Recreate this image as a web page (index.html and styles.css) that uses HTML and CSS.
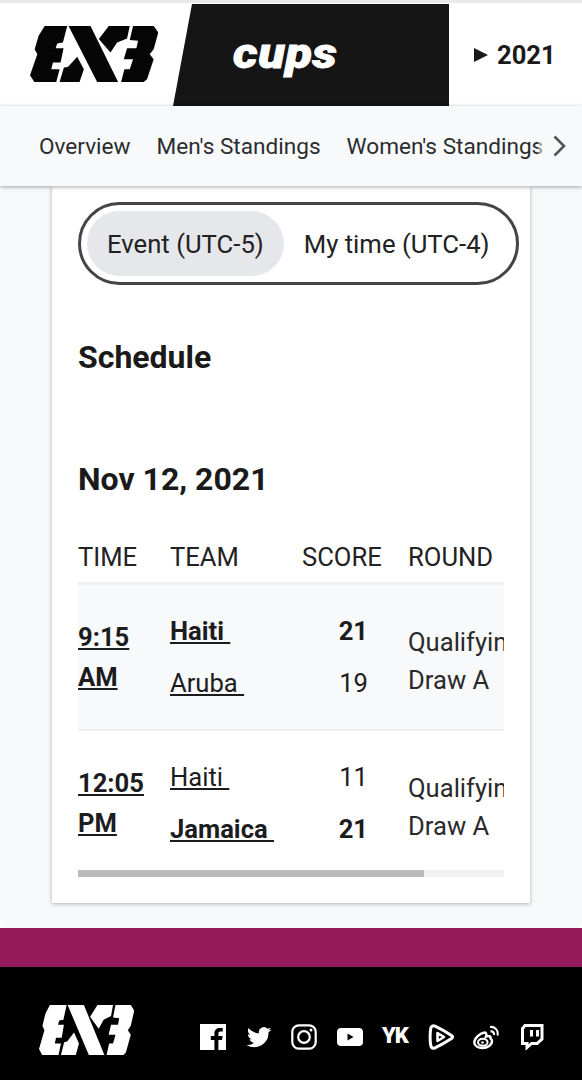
FILE: index.html
```html
<!DOCTYPE html>
<html lang="en">
<head>
<meta charset="utf-8">
<title>3x3 cups 2021 schedule</title>
<link rel="stylesheet" href="styles.css">
</head>
<body>
<svg class="defs" width="0" height="0" aria-hidden="true">
  <symbol id="logo" viewBox="90 78 385 167" preserveAspectRatio="none">
    <path d="M134 78H202L189 127L172 130L167 144H191L182 187H159L154 207H179L169 245H103L90 225L112 162L104 147L116 107Z"/>
    <path d="M206 78H272L355 245H292Z"/>
    <path d="M327 78H390L382 115L352 127L332 157L297 117Z"/>
    <path d="M179 245L192 202L204 200L232 170L252 207L239 245Z"/>
    <path d="M400 78H462L476 97L462 147L450 162L462 177L442 237L432 245H364L374 207H390L400 177H372L382 144H410L415 122L390 120Z"/>
  </symbol>
</svg>
<header class="top">
  <a class="brand" href="#"><svg class="logo-main"><use href="#logo"/></svg></a>
  <div class="cups"><span class="cups-text">cups</span></div>
  <div class="year"><span class="tri"></span><span>2021</span></div>
</header>
<nav class="nav">
  <a href="#">Overview</a>
  <a href="#">Men's Standings</a>
  <a href="#">Women's Standings</a>
  <span class="more">
    <svg viewBox="0 0 14 24" width="14" height="24"><path d="M1.500 2.500 11 12 1.500 21.500" fill="none" stroke="#555" stroke-width="2.600"/></svg>
  </span>
</nav>
<main class="page">
  <section class="card">
    <div class="toggle">
      <button class="pill active">Event (UTC-5)</button>
      <button class="pill">My time (UTC-4)</button>
    </div>
    <h2 class="section-title">Schedule</h2>
    <h3 class="day">Nov 12, 2021</h3>
    <div class="table-wrap">
      <table class="games">
        <thead>
          <tr><th class="c-time">TIME</th><th class="c-team">TEAM</th><th class="c-score">SCORE</th><th class="c-round">ROUND</th></tr>
        </thead>
        <tbody>
          <tr class="odd">
            <td class="time"><a href="#">9:15<br>AM</a></td>
            <td class="teams"><div class="line win"><a href="#">Haiti&nbsp;</a></div><div class="line"><a href="#">Aruba&nbsp;</a></div></td>
            <td class="scores"><div class="line win">21</div><div class="line">19</div></td>
            <td class="round">Qualifying<br>Draw A</td>
          </tr>
          <tr>
            <td class="time"><a href="#">12:05<br>PM</a></td>
            <td class="teams"><div class="line"><a href="#">Haiti&nbsp;</a></div><div class="line win"><a href="#">Jamaica&nbsp;</a></div></td>
            <td class="scores"><div class="line">11</div><div class="line win">21</div></td>
            <td class="round">Qualifying<br>Draw A</td>
          </tr>
        </tbody>
      </table>
    </div>
    <div class="scrollbar"><div class="thumb"></div></div>
  </section>
</main>
<div class="band"></div>
<footer class="foot">
  <svg class="logo-foot"><use href="#logo"/></svg>
  <div class="social">
    <svg class="ico" viewBox="0 0 26 26"><path fill="#fff" fill-rule="evenodd" d="M0 0H26V26H18.4V16H22L22.6 12H18.4V9.6C18.4 8.4 19 7.6 20.4 7.6H22.8V4.2C22 4.1 21 4 19.8 4 16.6 4 14.4 6 14.4 9.2V12H10.8V16H14.4V26H0Z"/></svg>
    <svg class="ico" viewBox="0 0 26 26"><path fill="#fff" d="M25.5 5.6c-.9.4-1.9.7-2.9.8 1-.6 1.8-1.6 2.2-2.8-1 .6-2 1-3.2 1.2A5 5 0 0 0 13 9.4C8.800 9.200 5.100 7.200 2.600 4.100c-1.300 2.300-.6 5.200 1.600 6.700-.8 0-1.600-.2-2.300-.6 0 2.400 1.700 4.500 4 5-.7.2-1.500.2-2.300.1.600 2 2.500 3.500 4.700 3.500A10 10 0 0 1 .5 20.900 14.300 14.300 0 0 0 22.500 8.200c1.200-.7 2.200-1.600 3-2.600Z"/></svg>
    <svg class="ico" viewBox="0 0 26 26"><g fill="none" stroke="#fff" stroke-width="2.200"><rect x="1.300" y="1.300" width="23.400" height="23.400" rx="6.500"/><circle cx="13" cy="13" r="5.800"/></g><circle cx="20" cy="6" r="1.500" fill="#fff"/></svg>
    <svg class="ico" viewBox="0 0 26 26"><path fill="#fff" fill-rule="evenodd" d="M4 4H22C24.500 4 26 5.500 26 8V18C26 20.500 24.500 22 22 22H4C1.500 22 0 20.500 0 18V8C0 5.500 1.500 4 4 4ZM10.500 9.500V16.500L16.500 13Z"/></svg>
    <span class="ico yk">YK</span>
    <svg class="ico" viewBox="0 0 26 26"><path fill="none" stroke="#fff" stroke-width="3" stroke-linejoin="round" d="M3 3.500C1.800 8 1.800 18 3 22.500 4 24.500 5.500 24.500 7 23.800 13 21 19 17.500 23.500 14.500 25 13.500 25 12.500 23.500 11.500 19 8.500 13 5 7 2.200 5.500 1.500 4 1.500 3 3.500Z"/><path fill="none" stroke="#fff" stroke-width="2.600" stroke-linejoin="round" d="M9.500 9V17L16 13Z"/></svg>
    <svg class="ico" viewBox="0 0 26 26"><g fill="none" stroke="#fff"><path stroke-width="2.200" d="M17.500 7.500C19.500 7 21.500 8.500 21 11"/><path stroke-width="2" d="M17 3C21.500 2.200 25.700 6 24.500 11.500"/><path stroke-width="2.400" d="M19 17C19 21 14.500 24 9.500 24 5 24 1.300 22 1.300 18.500 1.300 14.500 7 9 11.500 8.500 13.500 8.500 13.800 10.500 13 12.500 15.500 11.700 18 12 17.500 14.500 18.500 15 19 16 19 17Z"/><ellipse cx="9.800" cy="18.300" rx="4.800" ry="3.500" stroke-width="2"/></g><circle cx="9.500" cy="18.500" r="1.300" fill="#fff"/></svg>
    <svg class="ico" viewBox="0 0 26 26"><path fill="none" stroke="#fff" stroke-width="3" d="M3.500 4.500V19.500H8V23.500L12.500 19.500H18L23 15V1.500H6Z"/><path fill="#fff" d="M11 6H14V12.500H11ZM17 6H20V12.500H17Z"/></svg>
  </div>
</footer>
</body>
</html>
```
FILE: styles.css
```css
* { box-sizing: border-box; }
html, body { margin: 0; padding: 0; }
body {
  width: 582px;
  height: 1080px;
  overflow: hidden;
  background: #fff;
  color: #1c1c1e;
  font-family: Roboto, "Liberation Sans", sans-serif;
}
a { color: inherit; }
.defs { display: block; height: 0; }

.top {
  display: flex;
  height: 106px;
  background: #fff;
  border-top: 3px solid #e9e9ea;
}
.brand {
  display: flex;
  width: 173px;
  padding: 23px 0 0 30px;
}
.logo-main { width: 128px; height: 56px; fill: #050505; }
.cups {
  width: 276px;
  margin-top: 1px;
  padding-left: 60px;
  display: flex;
  align-items: center;
  background: #151516;
  clip-path: polygon(19px 0, 100% 0, 100% 100%, 0 100%);
}
.cups-text {
  color: #fff;
  font-size: 42px;
  font-weight: 900;
  font-style: italic;
  letter-spacing: .5px;
  line-height: 1;
  margin-top: -2px;
  -webkit-text-stroke: .8px #fff;
  transform: scaleX(1.16);
  transform-origin: left center;
}
.year {
  flex: 1;
  display: flex;
  align-items: center;
  gap: 9px;
  padding-left: 25px;
  font-size: 25.6px;
  font-weight: 700;
  color: #1a1a1a;
}
.tri {
  width: 0;
  height: 0;
  border-style: solid;
  border-width: 7px 0 7px 14px;
  border-color: transparent transparent transparent #1a1a1a;
}

.nav {
  position: relative;
  z-index: 2;
  display: flex;
  gap: 26px;
  align-items: center;
  height: 80px;
  padding-left: 39px;
  background: #f8f9fb;
  box-shadow: 0 1px 4px rgba(0, 0, 0, .35);
  font-size: 22.6px;
  white-space: nowrap;
  overflow: hidden;
}
.nav a { text-decoration: none; color: #2c2c2e; font-weight: 400; }
.more {
  position: absolute;
  right: 0;
  top: 0;
  bottom: 0;
  width: 44px;
  padding-left: 15px;
  display: flex;
  align-items: center;
  background: linear-gradient(to right, rgba(248, 249, 251, .4), #f8f9fb 30%);
}

.page {
  height: 742px;
  padding: 0 52px;
  background: #f8f9fb;
  border-radius: 0 0 6px 6px;
}
.card {
  height: 717px;
  padding: 16px 26px 0;
  background: #fff;
  box-shadow: 0 1px 4px rgba(0, 0, 0, .3);
}
.toggle {
  display: flex;
  width: 441px;
  padding: 6px;
  border: 3px solid #444;
  border-radius: 42px;
}
.pill {
  height: 65px;
  padding: 0 20px;
  border: 0;
  border-radius: 33px;
  background: none;
  font: 400 25.7px Roboto, sans-serif;
  color: #222;
  white-space: nowrap;
}
.pill.active { background: #e5e7eb; }
.section-title {
  margin: 52px 0 0;
  font-size: 32px;
  font-weight: 700;
  line-height: 40px;
  color: #1a1a1a;
}
.day {
  margin: 82px 0 0;
  font-size: 32px;
  font-weight: 700;
  line-height: 40px;
  color: #1a1a1a;
}
.table-wrap { width: 426px; overflow: hidden; margin-top: 40px; }
.games { width: 530px; border-collapse: collapse; table-layout: fixed; font-size: 25.6px; }
.games th {
  height: 43px;
  padding: 0 0 7px;
  font-weight: 400;
  text-align: left;
  line-height: 36px;
  border-bottom: 3px solid #eeeff1;
  color: #222;
}
.c-time { width: 92px; }
.c-team { width: 132px; }
.c-score { width: 106px; }
.c-round { width: 200px; }
.games td { padding: 0; vertical-align: middle; border-bottom: 2px solid #eeeff1; height: 146px; }
.games tbody tr:last-child td { border-bottom: 0; height: 140px; padding-top: 6px; }
.odd { background: #f8f9fb; }
.time { font-weight: 700; line-height: 40px; }
.line { height: 52px; line-height: 52px; }
.win { font-weight: 700; }
.games td.scores { text-align: right; padding-right: 40px; }
.games td.round { line-height: 38px; padding-top: 8px; color: #2a2a2a; }
.games tbody tr:last-child td.round { padding-top: 13px; }
.scrollbar { width: 426px; height: 7px; background: #f1f1f1; }
.thumb { width: 346px; height: 7px; background: #bbb; }

.band { height: 39px; background: #971a5c; }
.foot {
  height: 113px;
  padding: 38px 0 0 39px;
  background: #000;
  display: flex;
  align-items: flex-start;
}
.logo-foot { width: 95px; height: 50px; fill: #fff; }
.social {
  display: flex;
  gap: 19.500px;
  margin: 19px 0 0 66px;
}
.ico { width: 26px; height: 26px; display: block; flex: none; }
.yk {
  color: #fff;
  font-weight: 900;
  font-size: 22px;
  line-height: 24px;
  letter-spacing: -1px;
}
```
